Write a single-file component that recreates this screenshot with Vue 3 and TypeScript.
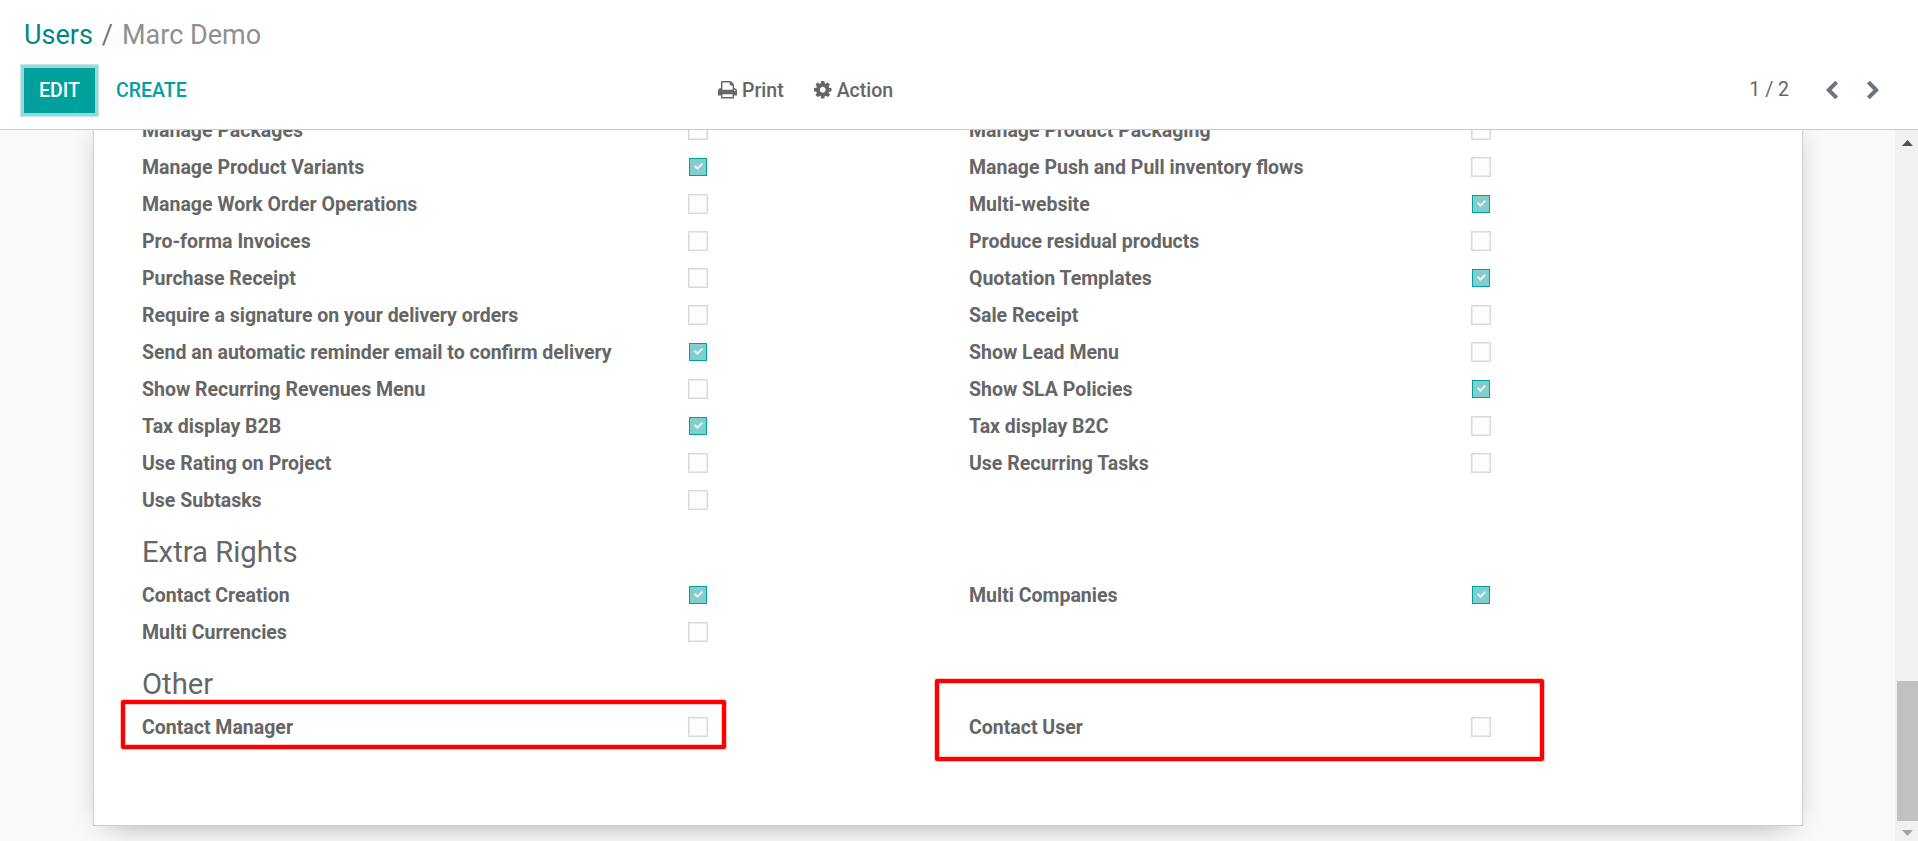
<script setup lang="ts">
interface Right {
  label: string
  on?: boolean
}
interface Section {
  title?: string
  rows: [Right, Right?][]
}

const sections: Section[] = [
  {
    rows: [
      [{ label: 'Manage Packages' }, { label: 'Manage Product Packaging' }],
      [{ label: 'Manage Product Variants', on: true }, { label: 'Manage Push and Pull inventory flows' }],
      [{ label: 'Manage Work Order Operations' }, { label: 'Multi-website', on: true }],
      [{ label: 'Pro-forma Invoices' }, { label: 'Produce residual products' }],
      [{ label: 'Purchase Receipt' }, { label: 'Quotation Templates', on: true }],
      [{ label: 'Require a signature on your delivery orders' }, { label: 'Sale Receipt' }],
      [{ label: 'Send an automatic reminder email to confirm delivery', on: true }, { label: 'Show Lead Menu' }],
      [{ label: 'Show Recurring Revenues Menu' }, { label: 'Show SLA Policies', on: true }],
      [{ label: 'Tax display B2B', on: true }, { label: 'Tax display B2C' }],
      [{ label: 'Use Rating on Project' }, { label: 'Use Recurring Tasks' }],
      [{ label: 'Use Subtasks' }],
    ],
  },
  {
    title: 'Extra Rights',
    rows: [
      [{ label: 'Contact Creation', on: true }, { label: 'Multi Companies', on: true }],
      [{ label: 'Multi Currencies' }],
    ],
  },
  {
    title: 'Other',
    rows: [[{ label: 'Contact Manager' }, { label: 'Contact User' }]],
  },
]
</script>

<template>
  <div class="page">
    <header class="panel">
      <nav class="crumbs">
        <a class="link">Users</a><span class="sep">/</span><span class="current">Marc Demo</span>
      </nav>
      <div class="bar">
        <div class="buttons">
          <button class="edit">EDIT</button>
          <button class="create">CREATE</button>
        </div>
        <div class="menus">
          <span class="menu">
            <svg class="print" viewBox="0 128 1664 1536"><path d="M384 1536h896v-256H384v256zm0-640h896V512h-160q-40 0-68-28t-28-68V256H384v640zm1152 64q0-26-19-45t-45-19-45 19-19 45 19 45 45 19 45-19 19-45zm128 0v416q0 13-9.5 22.5t-22.5 9.5h-224v160q0 40-28 68t-68 28H352q-40 0-68-28t-28-68v-160H32q-13 0-22.5-9.5T0 1376V960q0-79 56.5-135.5T192 768h64V224q0-40 28-68t68-28h672q40 0 88 20t76 48l152 152q28 28 48 76t20 88v256h64q79 0 135.5 56.5T1664 960z" /></svg>
            Print
          </span>
          <span class="menu">
            <svg class="cog" viewBox="128 128 1536 1536"><path d="M1152 896q0-106-75-181t-181-75-181 75-75 181 75 181 181 75 181-75 75-181zm512-109v222q0 12-8 23t-20 13l-185 28q-19 54-39 91 35 50 107 138 10 12 10 25t-9 23q-27 37-99 108t-94 71q-12 0-26-9l-138-108q-44 23-91 38-16 136-29 186-7 28-36 28H785q-14 0-24.5-8.5T749 1642l-28-184q-49-16-90-37l-141 107q-10 9-25 9-14 0-25-11-126-114-165-168-7-10-7-23 0-12 8-23 15-21 51-66.5t54-70.5q-27-50-41-99l-183-27q-13-2-21-12.5t-8-23.5V783q0-12 8-23t19-13l186-28q14-46 39-92-40-57-107-138-10-12-10-24 0-10 9-23 26-36 98.5-107.5T465 263q13 0 26 10l138 107q44-23 91-38 16-136 29-186 7-28 36-28h222q14 0 24.5 8.5T1043 156l28 184q49 16 90 37l142-107q9-9 24-9 13 0 25 10 129 119 165 170 7 8 7 22 0 12-8 23-15 21-51 66.5t-54 70.5q26 50 41 98l183 28q13 2 21 12.5t8 23.5z" /></svg>
            Action
          </span>
        </div>
        <div class="pager">
          <span class="count">1 / 2</span>
          <svg class="chev" viewBox="410 26 1036 1612"><path d="M1427 301l-531 531 531 531q19 19 19 45t-19 45l-166 166q-19 19-45 19t-45-19l-742-742q-19-19-19-45t19-45l742-742q19-19 45-19t45 19l166 166q19 19 19 45t-19 45z" /></svg>
          <svg class="chev next" viewBox="410 26 1036 1612"><path d="M1427 301l-531 531 531 531q19 19 19 45t-19 45l-166 166q-19 19-45 19t-45-19l-742-742q-19-19-19-45t19-45l742-742q19-19 45-19t45 19l166 166q19 19 19 45t-19 45z" /></svg>
        </div>
      </div>
    </header>

    <div class="body">
      <main class="content">
        <section class="sheet">
          <template v-for="(section, s) in sections" :key="s">
            <h2 v-if="section.title" class="title">{{ section.title }}</h2>
            <div v-for="(row, r) in section.rows" :key="r" class="row">
              <template v-for="(cell, c) in row" :key="c">
                <template v-if="cell">
                  <label class="label">{{ cell.label }}</label>
                  <span class="cell">
                    <span class="box" :class="{ on: cell.on }">
                      <svg v-if="cell.on" class="tick" viewBox="121 334 1550 1188"><path d="M1671 566q0 40-28 68l-724 724-136 136q-28 28-68 28t-68-28l-136-136-362-362q-28-28-28-68t28-68l136-136q28-28 68-28t68 28l294 295 656-657q28-28 68-28t68 28l136 136q28 28 28 68z" /></svg>
                    </span>
                  </span>
                </template>
              </template>
            </div>
          </template>
        </section>
      </main>
      <aside class="scrollbar">
        <svg class="arrow" viewBox="0 0 11 6"><path d="M5.5 0L11 6H0z" fill="#505050" /></svg>
        <div class="thumb"></div>
        <svg class="arrow" viewBox="0 0 11 6"><path d="M0 0h11L5.5 6z" fill="#a3a3a3" /></svg>
      </aside>
    </div>

    <div class="mark manager"></div>
    <div class="mark user"></div>
  </div>
</template>

<style>
body {
  overflow: hidden;
}
</style>

<style scoped>
.page {
  position: relative;
  display: flex;
  flex-direction: column;
  width: 1918px;
  height: 841px;
  overflow: hidden;
  background: #fff;
  color: #666;
  font-family: Roboto, sans-serif;
  font-size: 19.5px;
  line-height: 29px;
}
.panel {
  box-sizing: border-box;
  flex: none;
  height: 130px;
  padding: 15px 24px 0;
  border-bottom: 1px solid #ccc;
}
.crumbs {
  height: 53px;
  font-size: 27px;
  line-height: 41px;
}
.link {
  color: #008784;
}
.sep {
  padding: 0 9px;
  color: #6c757d;
}
.current {
  color: #8f8f8f;
}
.bar {
  display: grid;
  grid-template-columns: 694px 1fr auto;
  align-items: center;
  height: 45px;
}
.buttons,
.menus,
.menu,
.pager {
  display: flex;
  align-items: center;
}
.edit,
.create {
  height: 45px;
  padding: 0;
  border: 0;
  background: none;
  font: 500 19.5px/45px Roboto, sans-serif;
}
.edit {
  width: 71px;
  background: #00a09d;
  color: #fff;
  box-shadow: 0 0 0 3px #97d9d7, 0 0 0 4px #bfe8e6;
}
.create {
  margin-left: 21px;
  color: #00a09d;
}
.menus {
  gap: 30.5px;
  font-weight: 500;
}
.menu {
  gap: 5px;
}
svg {
  display: block;
  fill: currentColor;
}
.print {
  width: 19px;
  height: 17.5px;
  margin-bottom: 1px;
}
.cog {
  width: 17.5px;
  height: 17.5px;
  margin-bottom: 1px;
}
.pager {
  padding: 0 15px 2px 0;
}
.count {
  margin-right: 37px;
}
.chev {
  width: 12px;
  height: 18px;
  color: #6c757d;
}
.next {
  margin-left: 29px;
  transform: scaleX(-1);
}
.body {
  display: flex;
  flex: 1;
  min-height: 0;
}
.content {
  flex: 1;
  overflow: hidden;
  padding-left: 93px;
  background: #f9f9f9;
}
.sheet {
  box-sizing: border-box;
  width: 1710px;
  height: 715px;
  margin-top: -19px;
  padding-left: 48px;
  border: 1px solid #cfcfd5;
  background: #fff;
  box-shadow: 0 7.5px 30px -15px rgba(0, 0, 0, 0.48);
}
.row {
  display: grid;
  grid-template-columns: 546px 281px 502px 1fr;
  align-items: center;
  height: 37px;
}
.label {
  font-weight: 700;
  white-space: nowrap;
}
.cell {
  display: flex;
  align-items: center;
  padding-bottom: 2px;
}
.box {
  box-sizing: border-box;
  display: flex;
  align-items: center;
  justify-content: center;
  width: 20px;
  height: 20px;
  border: 1px solid #d9d9d9;
  background: #fcfefe;
  box-shadow: inset 0 0 0 1px #ebebeb;
}
.box.on {
  width: 18px;
  height: 18px;
  margin: 0 1px;
  border-color: #00a09d;
  background: #7fcfce;
  box-shadow: none;
}
.tick {
  width: 9px;
  height: 7px;
  margin-left: 1px;
  color: #ececec;
}
.title {
  height: 58px;
  margin: 0;
  font-size: 29.25px;
  font-weight: 400;
  line-height: 66px;
}
.scrollbar {
  display: flex;
  flex-direction: column;
  align-items: center;
  box-sizing: border-box;
  width: 23px;
  padding: 10px 0 5px;
  background: #f1f1f1;
}
.arrow {
  width: 11px;
  height: 6px;
  margin-left: 2px;
}
.thumb {
  align-self: flex-end;
  width: 21px;
  height: 140px;
  margin: auto 0 9px;
  background: #c1c1c1;
}
.mark {
  position: absolute;
  box-sizing: border-box;
  border: 4px solid #f00;
  border-radius: 2px;
  box-shadow: 0 0 0 1px #ffc4c4, inset 0 0 0 1px #ffc4c4;
}
.manager {
  left: 121px;
  top: 700px;
  width: 605px;
  height: 49px;
}
.user {
  left: 935px;
  top: 679px;
  width: 609px;
  height: 82px;
}
</style>
